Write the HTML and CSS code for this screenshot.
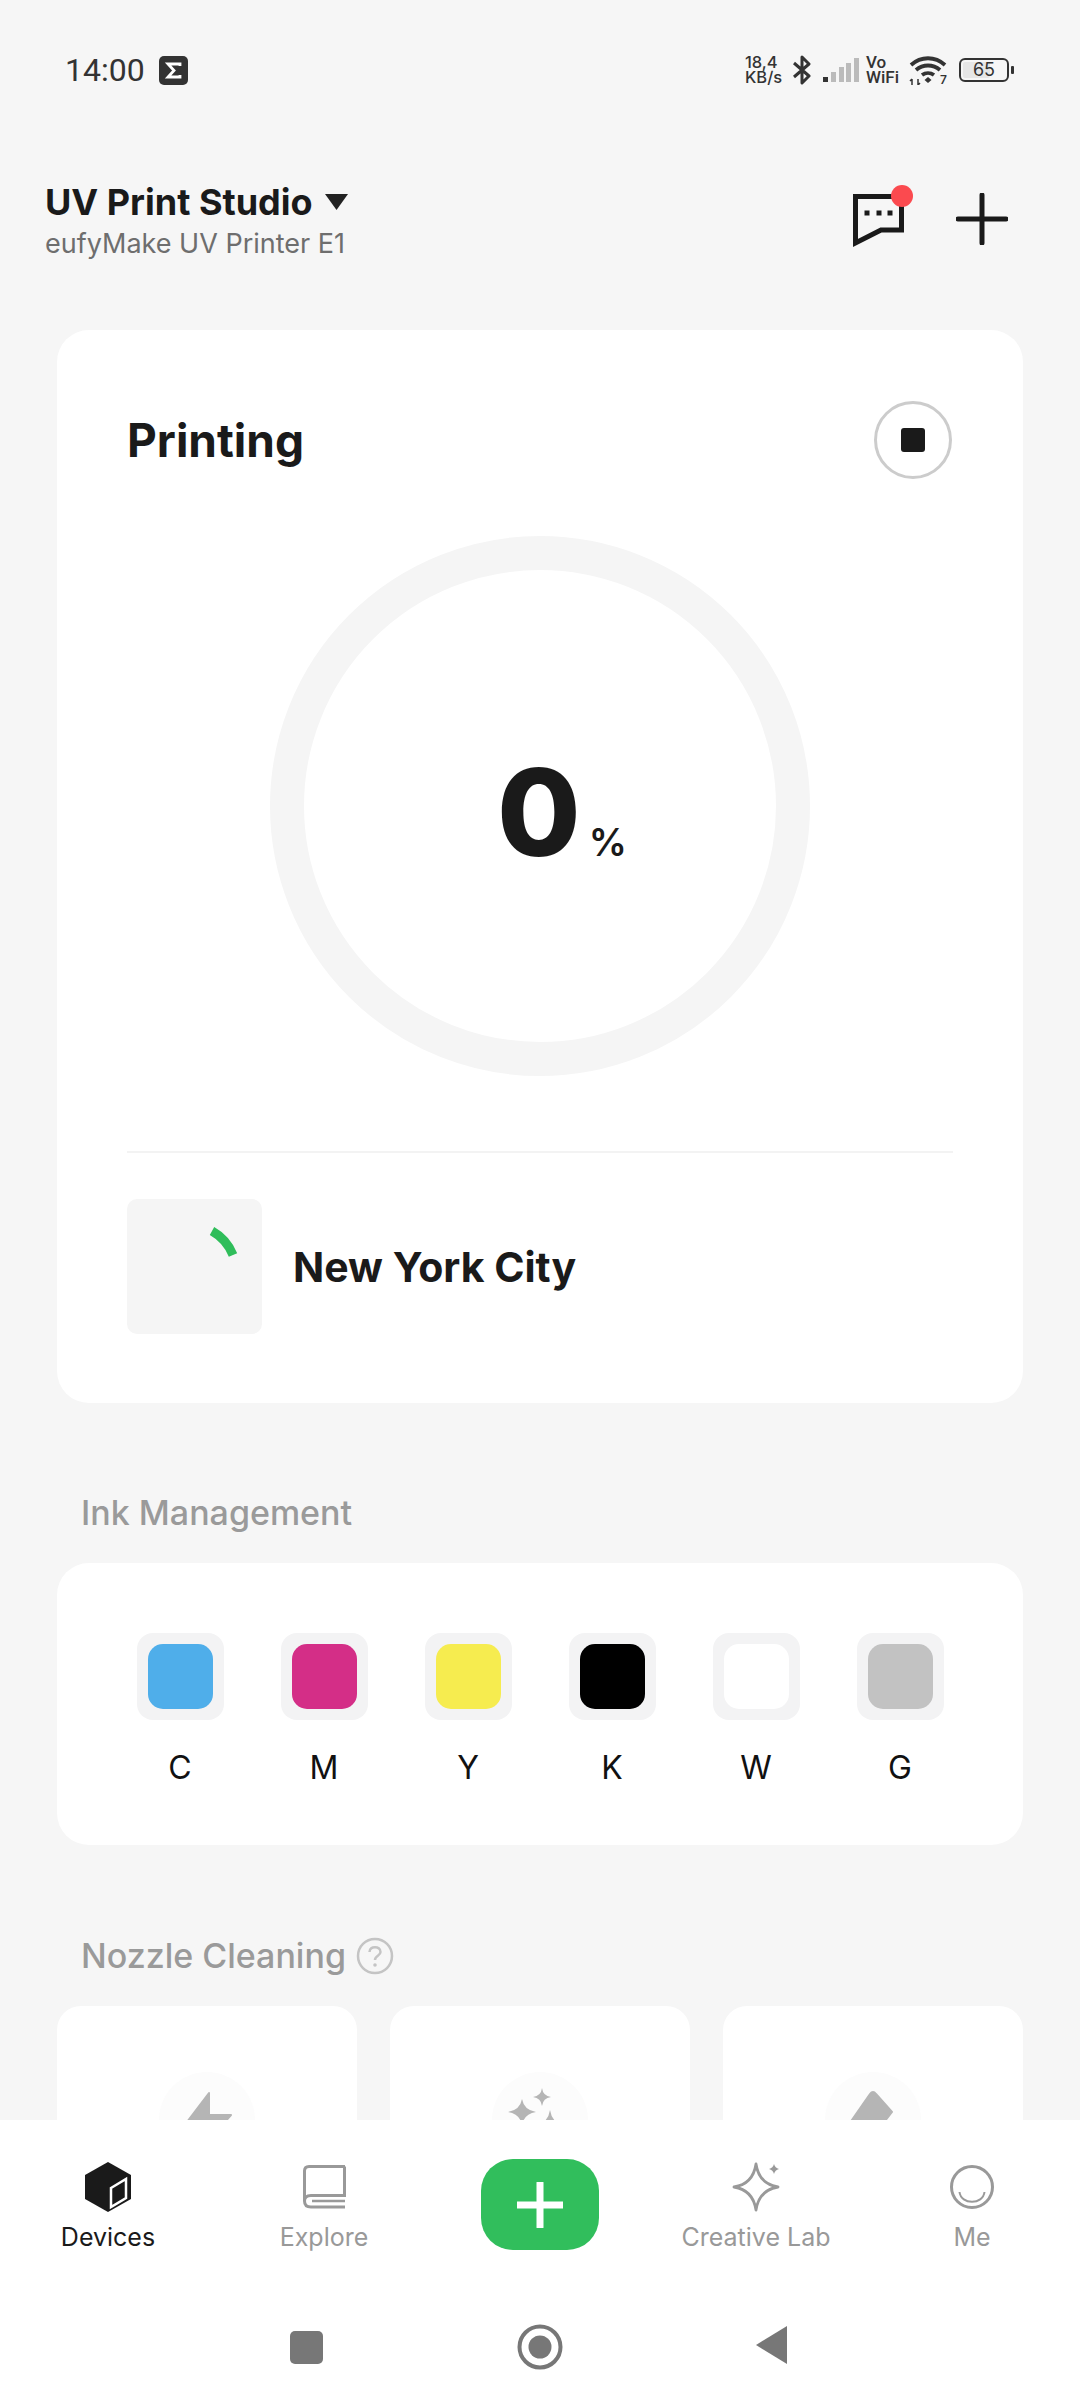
FILE: index.html
```html
<!DOCTYPE html>
<html>
	<head>
		<meta charset="utf-8">
		<meta name="viewport" content="width = device-width, initial-scale = 1.0">
		<title>UV Print Studio</title>
		<link rel="stylesheet" href="styles.css">
	</head>
	<body>
		<div id="screen">
			<div id="content">
				<div class="status-bar">
					<div class="status-bar__left">
						<span class="status-bar__time">14:00</span>
						<svg class="status-bar__sigma" viewBox="0 0 29 29">
							<rect width="29" height="29" rx="5" fill="#333"/>
							<path d="M21 10V8H9L15 14.500L9 21H21V19" fill="none" stroke="#fff" stroke-width="2.800"/>
						</svg>
					</div>
					<div class="status-bar__right">
						<div class="status-bar__speed">18,4<br>KB/s</div>
						<svg class="status-bar__bt" viewBox="0 0 20 30">
							<path d="M2 8L17 21L10 28V2L17 9L2 22" fill="none" stroke="#333" stroke-width="3" stroke-linejoin="round"/>
						</svg>
						<svg class="status-bar__signal" viewBox="0 0 36 26">
							<rect x="0" y="20" width="5" height="5" fill="#333"/>
							<rect x="8" y="15" width="5" height="10" fill="#bbb"/>
							<rect x="16" y="10" width="5" height="15" fill="#bbb"/>
							<rect x="23" y="6" width="5" height="19" fill="#bbb"/>
							<rect x="31" y="1" width="5" height="24" fill="#bbb"/>
						</svg>
						<div class="status-bar__vowifi">Vo<br>WiFi</div>
						<div class="status-bar__wifi">
							<svg viewBox="0 0 38 29">
								<path d="M2 9C12 0 26 0 36 9M7 14C14 8 24 8 31 14M13 19C16.500 16.500 21.500 16.500 25 19" fill="none" stroke="#333" stroke-width="3.800"/>
								<path d="M15.500 24L19 21L22.500 24L19 27Z" fill="#333"/>
								<path d="M3 29V23M1 25L3 23M9 23V29M9 29L11 27" fill="none" stroke="#333" stroke-width="1.500"/>
							</svg>
							<span class="status-bar__wifi-num">7</span>
						</div>
						<div class="status-bar__battery">
							<div class="status-bar__battery-body">
								<div class="status-bar__battery-fill"></div>
								<span class="status-bar__battery-num">65</span>
							</div>
							<div class="status-bar__battery-tip"></div>
						</div>
					</div>
				</div>

				<div class="header">
					<div>
						<div class="header__name">
							<span>UV Print Studio</span>
							<svg class="header__caret" viewBox="0 0 23 16"><path d="M0 0H23L11.500 16Z" fill="#222"/></svg>
						</div>
						<div class="header__model">eufyMake UV Printer E1</div>
					</div>
					<div class="header__actions">
						<svg class="header__chat" viewBox="0 0 64 64">
							<path d="M4.500 11.500H50.500V45H30L4.500 58Z" fill="none" stroke="#1a1a1a" stroke-width="5"/>
							<rect x="13.500" y="25.500" width="5" height="5" fill="#1a1a1a"/>
							<rect x="25.500" y="25.500" width="5" height="5" fill="#1a1a1a"/>
							<rect x="36.500" y="25.500" width="5" height="5" fill="#1a1a1a"/>
							<circle cx="51" cy="11" r="11" fill="#fb4a4f"/>
						</svg>
						<svg class="header__plus" viewBox="0 0 52 52">
							<path d="M26 2V50M2 26H50" fill="none" stroke="#1a1a1a" stroke-width="5" stroke-linecap="round"/>
						</svg>
					</div>
				</div>

				<div class="card print-card">
					<div class="print-card__top">
						<h2 class="print-card__title">Printing</h2>
						<div class="stop-btn"><div class="stop-btn__square"></div></div>
					</div>
					<div class="ring">
						<span class="ring__value">0</span><span class="ring__unit">%</span>
					</div>
					<div class="job">
						<div class="job__thumb">
							<svg viewBox="0 0 135 135">
								<path d="M85 32A48 48 0 0 1 106 56" fill="none" stroke="#2fbd5a" stroke-width="9"/>
							</svg>
						</div>
						<div class="job__name">New York City</div>
					</div>
				</div>

				<div class="section-title">Ink Management</div>
				<div class="card ink-card">
					<div class="ink"><div class="ink__well"><div class="ink__color ink__color--c"></div></div><div class="ink__label">C</div></div>
					<div class="ink"><div class="ink__well"><div class="ink__color ink__color--m"></div></div><div class="ink__label">M</div></div>
					<div class="ink"><div class="ink__well"><div class="ink__color ink__color--y"></div></div><div class="ink__label">Y</div></div>
					<div class="ink"><div class="ink__well"><div class="ink__color ink__color--k"></div></div><div class="ink__label">K</div></div>
					<div class="ink"><div class="ink__well"><div class="ink__color ink__color--w"></div></div><div class="ink__label">W</div></div>
					<div class="ink"><div class="ink__well"><div class="ink__color ink__color--g"></div></div><div class="ink__label">G</div></div>
				</div>

				<div class="section-title section-title--nozzle">
					<span>Nozzle Cleaning</span>
					<svg class="help-icon" viewBox="0 0 38 38">
						<circle cx="19" cy="19" r="17" fill="none" stroke="#c4c4c4" stroke-width="2.500"/>
						<path d="M13.500 15C13.500 8.500 24.500 8.500 24.500 15C24.500 19 19 18.500 19 23" fill="none" stroke="#c4c4c4" stroke-width="2.500"/>
						<circle cx="19" cy="28" r="1.800" fill="#c4c4c4"/>
					</svg>
				</div>
				<div class="nozzle-row">
					<div class="nozzle-card">
						<div class="nozzle-card__circle">
							<svg viewBox="0 0 96 96"><path d="M50 21L22 58H42L38 82L72 43H50Z" fill="#b5b5b5" stroke="#b5b5b5" stroke-width="2" stroke-linejoin="round"/></svg>
						</div>
					</div>
					<div class="nozzle-card">
						<div class="nozzle-card__circle">
							<svg viewBox="0 0 96 96">
								<path d="M30 27Q32 38 44 40Q32 42 30 53Q28 42 16 40Q28 38 30 27Z" fill="#b5b5b5"/>
								<path d="M50 16Q51 24 59 25Q51 26 50 34Q49 26 41 25Q49 24 50 16Z" fill="#b5b5b5"/>
								<path d="M58 38Q60 51 72 53Q60 55 58 68Q56 55 44 53Q56 51 58 38Z" fill="#b5b5b5"/>
							</svg>
						</div>
					</div>
					<div class="nozzle-card">
						<div class="nozzle-card__circle">
							<svg viewBox="0 0 96 96"><path d="M45 22Q48 18 51 22L67 40L45 68H28L20 58Z" fill="#b5b5b5" stroke="#b5b5b5" stroke-width="2" stroke-linejoin="round"/></svg>
						</div>
					</div>
				</div>
			</div>

			<div id="bottom">
				<div class="tabs">
					<div class="tab tab--active">
						<svg class="tab__icon" viewBox="0 0 50 54">
							<path d="M25 2L48 15V39L25 52L2 39V15Z" fill="#1a1a1a"/>
							<path d="M28 28L43 19V38L28 47Z" fill="none" stroke="#fff" stroke-width="2.500"/>
						</svg>
						<div class="tab__label">Devices</div>
					</div>
					<div class="tab">
						<svg class="tab__icon" viewBox="0 0 50 54">
							<path d="M46 6.500H10Q5.500 6.500 5.500 11V41Q5.500 47 12 47H46M45.500 6.500V35.500H12Q5.500 35.500 5.500 41" fill="none" stroke="#999" stroke-width="3"/>
							<path d="M13 41H46" fill="none" stroke="#999" stroke-width="2.500"/>
						</svg>
						<div class="tab__label">Explore</div>
					</div>
					<div class="tab">
						<div class="add-btn">
							<svg viewBox="0 0 46 46"><path d="M23 1V45M1 23H45" fill="none" stroke="#fff" stroke-width="7" stroke-linecap="round"/></svg>
						</div>
					</div>
					<div class="tab">
						<svg class="tab__icon" viewBox="0 0 50 54">
							<path d="M25 4Q28 24 47 27Q28 30 25 50Q22 30 3 27Q22 24 25 4Z" fill="none" stroke="#999" stroke-width="2.800" stroke-linejoin="round"/>
							<path d="M43 4Q44 8 48 9Q44 10 43 14Q42 10 38 9Q42 8 43 4Z" fill="#999"/>
						</svg>
						<div class="tab__label">Creative Lab</div>
					</div>
					<div class="tab">
						<svg class="tab__icon" viewBox="0 0 50 54">
							<circle cx="25" cy="27" r="20.500" fill="none" stroke="#999" stroke-width="3"/>
							<path d="M12.500 32C14 45 36 45 37.500 32" fill="none" stroke="#999" stroke-width="2"/>
						</svg>
						<div class="tab__label">Me</div>
					</div>
				</div>
				<div class="nav-keys">
					<div class="nav-keys__square"></div>
					<svg class="nav-keys__home" viewBox="0 0 46 46">
						<circle cx="23" cy="23" r="20.500" fill="none" stroke="#777" stroke-width="4"/>
						<circle cx="23" cy="23" r="11.500" fill="#777"/>
					</svg>
					<svg class="nav-keys__back" viewBox="0 0 32 38"><path d="M0 19L31 0V38Z" fill="#777"/></svg>
				</div>
			</div>
		</div>
	</body>
</html>
```

FILE: styles.css
```css
* {
	box-sizing: border-box;
}
body {
	margin: 0;
	background: #f6f6f6;
	font-family: "Inter", "Noto Sans", sans-serif;
	color: #1a1a1a;
}
svg {
	display: block;
}
#screen {
	width: 1080px;
	height: 2400px;
	display: flex;
	flex-direction: column;
	overflow: hidden;
}
#content {
	flex: 1;
	min-height: 0;
	overflow: hidden;
}

/* status bar */
.status-bar {
	height: 70px;
	margin-top: 35px;
	padding: 0 66px 0 65px;
	display: flex;
	justify-content: space-between;
	align-items: center;
	color: #333;
}
.status-bar__left {
	display: flex;
	align-items: center;
	gap: 14px;
}
.status-bar__time {
	font-family: "Roboto", sans-serif;
	font-size: 32px;
}
.status-bar__sigma {
	width: 29px;
	height: 29px;
}
.status-bar__right {
	display: flex;
	align-items: center;
}
.status-bar__speed {
	font-size: 16.500px;
	line-height: 15px;
	font-weight: 500;
	width: 47px;
}
.status-bar__bt {
	width: 20px;
	height: 30px;
}
.status-bar__signal {
	width: 36px;
	height: 26px;
	margin-left: 11px;
}
.status-bar__vowifi {
	font-family: "Roboto", sans-serif;
	font-size: 17px;
	line-height: 15px;
	font-weight: 500;
	margin-left: 7px;
	width: 43px;
}
.status-bar__wifi {
	position: relative;
	width: 38px;
	height: 29px;
}
.status-bar__wifi-num {
	position: absolute;
	right: 0;
	bottom: -2px;
	font-size: 12px;
	font-weight: 600;
}
.status-bar__battery {
	display: flex;
	align-items: center;
	margin-left: 12px;
}
.status-bar__battery-body {
	position: relative;
	width: 50px;
	height: 24px;
	border: 2px solid #333;
	border-radius: 6px;
	padding: 2px;
}
.status-bar__battery-fill {
	width: 65%;
	height: 100%;
	background: #e6e6e6;
	border-radius: 2px;
}
.status-bar__battery-num {
	position: absolute;
	left: 0;
	right: 0;
	top: 0;
	text-align: center;
	font-size: 18px;
	line-height: 20px;
}
.status-bar__battery-tip {
	width: 3px;
	height: 8px;
	margin-left: 2px;
	background: #333;
	border-radius: 1px;
}

/* header */
.header {
	margin-top: 77px;
	padding: 0 72px 0 45px;
	display: flex;
	justify-content: space-between;
	height: 148px;
}
.header__name {
	display: flex;
	align-items: center;
	gap: 12px;
	font-size: 36px;
	line-height: 40px;
	font-weight: 700;
}
.header__caret {
	width: 23px;
	height: 16px;
}
.header__model {
	margin-top: 6px;
	font-size: 27px;
	line-height: 32px;
	color: #6e6e6e;
}
.header__actions {
	display: flex;
	gap: 41px;
	align-items: flex-start;
}
.header__chat {
	width: 64px;
	height: 64px;
	margin-top: 3px;
}
.header__plus {
	width: 52px;
	height: 52px;
	margin-top: 11px;
}

/* cards */
.card {
	margin: 0 57px;
	background: #fff;
	border-radius: 32px;
}
.print-card {
	height: 1073px;
	padding: 0 70px;
}
.print-card__top {
	height: 220px;
	padding-top: 71px;
	display: flex;
	justify-content: space-between;
	align-items: flex-start;
}
.print-card__title {
	margin: 0;
	font-size: 46px;
	line-height: 78px;
	font-weight: 700;
}
.stop-btn {
	width: 78px;
	height: 78px;
	margin-right: 1px;
	border: 3px solid #ccc;
	border-radius: 50%;
	display: flex;
	align-items: center;
	justify-content: center;
}
.stop-btn__square {
	width: 24px;
	height: 24px;
	border-radius: 3px;
	background: #1a1a1a;
}
.ring {
	width: 540px;
	height: 540px;
	margin: -14px auto 0;
	border: 34px solid #f5f5f5;
	border-radius: 50%;
	display: flex;
	align-items: baseline;
	justify-content: center;
	padding-top: 162px;
}
.ring__value {
	font-size: 121px;
	line-height: 160px;
	font-weight: 800;
	margin-left: 44px;
}
.ring__unit {
	font-size: 38px;
	font-weight: 600;
	margin-left: 8px;
}
.job {
	margin-top: 75px;
	padding-top: 46px;
	border-top: 2px solid #f3f3f3;
	display: flex;
	align-items: center;
	gap: 31px;
}
.job__thumb {
	width: 135px;
	height: 135px;
	background: #f5f5f5;
	border-radius: 10px;
}
.job__name {
	font-size: 41px;
	font-weight: 700;
}
.section-title {
	margin: 89px 0 0 81px;
	height: 42px;
	font-size: 34px;
	line-height: 42px;
	font-weight: 500;
	color: #9a9a9a;
}
.section-title--nozzle {
	margin-top: 90px;
	display: flex;
	align-items: center;
	gap: 10px;
}
.help-icon {
	width: 38px;
	height: 38px;
}

/* ink */
.ink-card {
	margin-top: 29px;
	height: 282px;
	padding: 70px 0 0 51px;
	display: grid;
	grid-template-columns: repeat(6, 144px);
}
.ink {
	display: flex;
	flex-direction: column;
	align-items: center;
}
.ink__well {
	width: 87px;
	height: 87px;
	padding: 11px;
	background: #f3f3f4;
	border-radius: 16px;
}
.ink__color {
	width: 100%;
	height: 100%;
	border-radius: 15px;
}
.ink__color--c { background: #4faeea; }
.ink__color--m { background: #d42e87; }
.ink__color--y { background: #f6ec4f; }
.ink__color--k { background: #000; }
.ink__color--w { background: #fff; }
.ink__color--g { background: #c2c2c2; }
.ink__label {
	margin-top: 28px;
	font-size: 32px;
	line-height: 40px;
	color: #111;
}

/* nozzle */
.nozzle-row {
	margin: 29px 57px 0;
	display: grid;
	grid-template-columns: repeat(3, 300px);
	gap: 33px;
}
.nozzle-card {
	height: 240px;
	padding-top: 66px;
	background: #fff;
	border-radius: 24px;
}
.nozzle-card__circle {
	width: 96px;
	height: 96px;
	margin: 0 auto;
	border-radius: 50%;
	background: #fcfcfc;
}

/* bottom */
#bottom {
	height: 280px;
	background: #fff;
	flex: none;
}
.tabs {
	height: 158px;
	padding-top: 40px;
	display: grid;
	grid-template-columns: repeat(5, 216px);
}
.tab {
	display: flex;
	flex-direction: column;
	align-items: center;
}
.tab__icon {
	width: 50px;
	height: 54px;
}
.tab__label {
	margin-top: 8px;
	font-size: 25px;
	line-height: 30px;
	color: #999;
}
.tab--active .tab__label {
	color: #1a1a1a;
}
.add-btn {
	width: 118px;
	height: 91px;
	margin-top: -1px;
	background: #31be5c;
	border-radius: 32px;
	display: flex;
	align-items: center;
	justify-content: center;
}
.add-btn svg {
	width: 46px;
	height: 46px;
}
.nav-keys {
	height: 122px;
	padding: 50px 0 0 290px;
	display: flex;
	align-items: flex-start;
}
.nav-keys__square {
	width: 33px;
	height: 33px;
	margin-top: 3px;
	background: #777;
	border-radius: 5px;
}
.nav-keys__home {
	width: 46px;
	height: 46px;
	margin-left: 194px;
	margin-top: -4px;
}
.nav-keys__back {
	width: 32px;
	height: 38px;
	margin-left: 193px;
	margin-top: -2px;
}
```
